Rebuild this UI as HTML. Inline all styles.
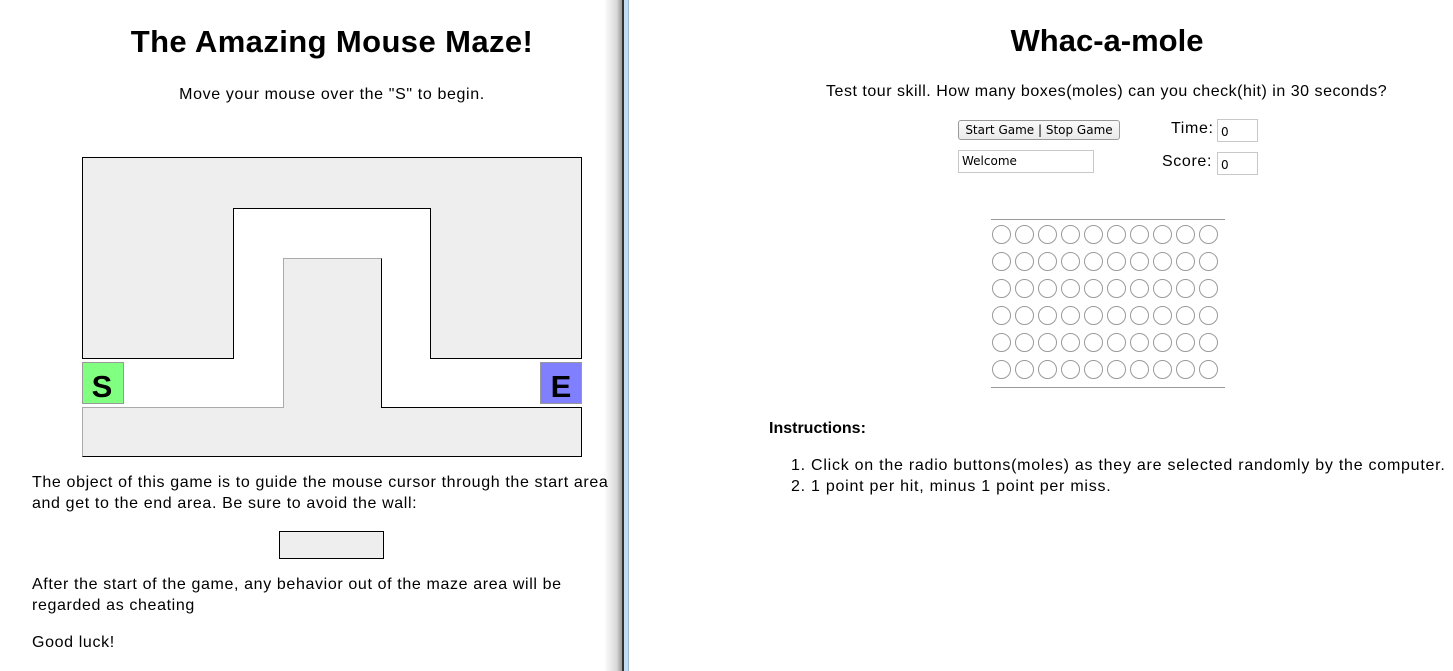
<!DOCTYPE html>
<html><head><meta charset="utf-8"><style>
*{margin:0;padding:0;box-sizing:border-box}
body{width:1453px;height:671px;background:#fff;position:relative;overflow:hidden;font-family:"Liberation Sans",sans-serif;color:#000}
.t{position:absolute;white-space:nowrap;font-size:16px;letter-spacing:.63px}
.c{text-align:center}
h1{position:absolute;font-size:31px;font-weight:bold;white-space:nowrap;text-align:center}
.inp{position:absolute;border:1px solid #c8c8c8;background:#fff;font-size:12px;padding:3px 3px;font-family:"DejaVu Sans",sans-serif}
.r{position:absolute;width:19px;height:19px;border:1px solid #9a9a9a;border-radius:50%;background:#fff}
</style></head><body>
<div style="position:absolute;left:604px;top:0;width:18px;height:671px;background:linear-gradient(to right,#fff,#d8d8d8 70%,#999)"></div>
<div style="position:absolute;left:622px;top:0;width:2px;height:671px;background:#333"></div>
<div style="position:absolute;left:624px;top:0;width:5px;height:671px;background:#c4dcf4;border-right:1px solid #9fb8d4"></div>

<h1 style="left:0;width:664px;top:24px;letter-spacing:.4px">The Amazing Mouse Maze!</h1>
<div class="t c" style="left:0;width:664px;top:86px">Move your mouse over the "S" to begin.</div>
<svg style="position:absolute;left:0;top:0" width="620" height="671">
<polygon points="82.5,157.5 581.5,157.5 581.5,358.5 430.5,358.5 430.5,208.5 233.5,208.5 233.5,358.5 82.5,358.5" fill="#eee" stroke="#000"/>
<polygon points="82.5,407.5 283.5,407.5 283.5,258.5 381.5,258.5 381.5,407.5 581.5,407.5 581.5,456.5 82.5,456.5" fill="#eee" stroke="#000"/>
<polyline points="82.5,456.5 82.5,407.5 283.5,407.5 283.5,258.5 381.5,258.5" fill="none" stroke="#aaa"/>
<rect x="82.5" y="362.5" width="41" height="41" fill="#80ff80" stroke="#999"/>
<rect x="540.5" y="362.5" width="41" height="41" fill="#8080ff" stroke="#999"/>
<text x="102" y="397" font-family="Liberation Sans" font-weight="bold" font-size="31" text-anchor="middle">S</text>
<text x="561" y="397" font-family="Liberation Sans" font-weight="bold" font-size="31" text-anchor="middle">E</text>
<rect x="279.5" y="531.5" width="104" height="27" fill="#eee" stroke="#000"/>
</svg>
<div class="t" style="left:32px;top:474px">The object of this game is to guide the mouse cursor through the start area</div>
<div class="t" style="left:32px;top:495px">and get to the end area. Be sure to avoid the wall:</div>
<div class="t" style="left:32px;top:576px">After the start of the game, any behavior out of the maze area will be</div>
<div class="t" style="left:32px;top:597px">regarded as cheating</div>
<div class="t" style="left:32px;top:634px">Good luck!</div>

<h1 style="left:862px;width:490px;top:23px">Whac-a-mole</h1>
<div class="t" style="left:826px;top:83px;letter-spacing:.52px">Test tour skill. How many boxes(moles) can you check(hit) in 30 seconds?</div>
<div style="position:absolute;left:958px;top:120px;width:162px;height:20px;border:1px solid #999;border-radius:3px;background:linear-gradient(#fafafa,#eaeaea);font-family:'DejaVu Sans',sans-serif;font-size:12px;text-align:center;line-height:18px">Start Game | Stop Game</div>
<div class="inp" style="left:958px;top:150px;width:136px;height:23px">Welcome</div>
<div class="t" style="left:1171px;top:120px">Time:</div>
<div class="t" style="left:1162px;top:153px">Score:</div>
<div class="inp" style="left:1217px;top:119px;width:41px;height:23px;padding-top:5px">0</div>
<div class="inp" style="left:1217px;top:152px;width:41px;height:23px;padding-top:5px">0</div>
<div style="position:absolute;left:991px;top:219px;width:234px;height:1px;background:#999"></div>
<div style="position:absolute;left:991px;top:387px;width:234px;height:1px;background:#999"></div>
<div id="g"></div>
<script>
var h='';for(var r=0;r<6;r++)for(var c=0;c<10;c++)h+='<div class="r" style="left:'+(992+c*23)+'px;top:'+(225+r*27)+'px"></div>';
document.getElementById('g').innerHTML=h;
</script>
<div class="t" style="left:769px;top:420px;font-weight:bold;letter-spacing:0">Instructions:</div>
<div class="t" style="left:791px;top:457px;letter-spacing:.75px">1. Click on the radio buttons(moles) as they are selected randomly by the computer.</div>
<div class="t" style="left:791px;top:478px;letter-spacing:.75px">2. 1 point per hit, minus 1 point per miss.</div>
</body></html>
